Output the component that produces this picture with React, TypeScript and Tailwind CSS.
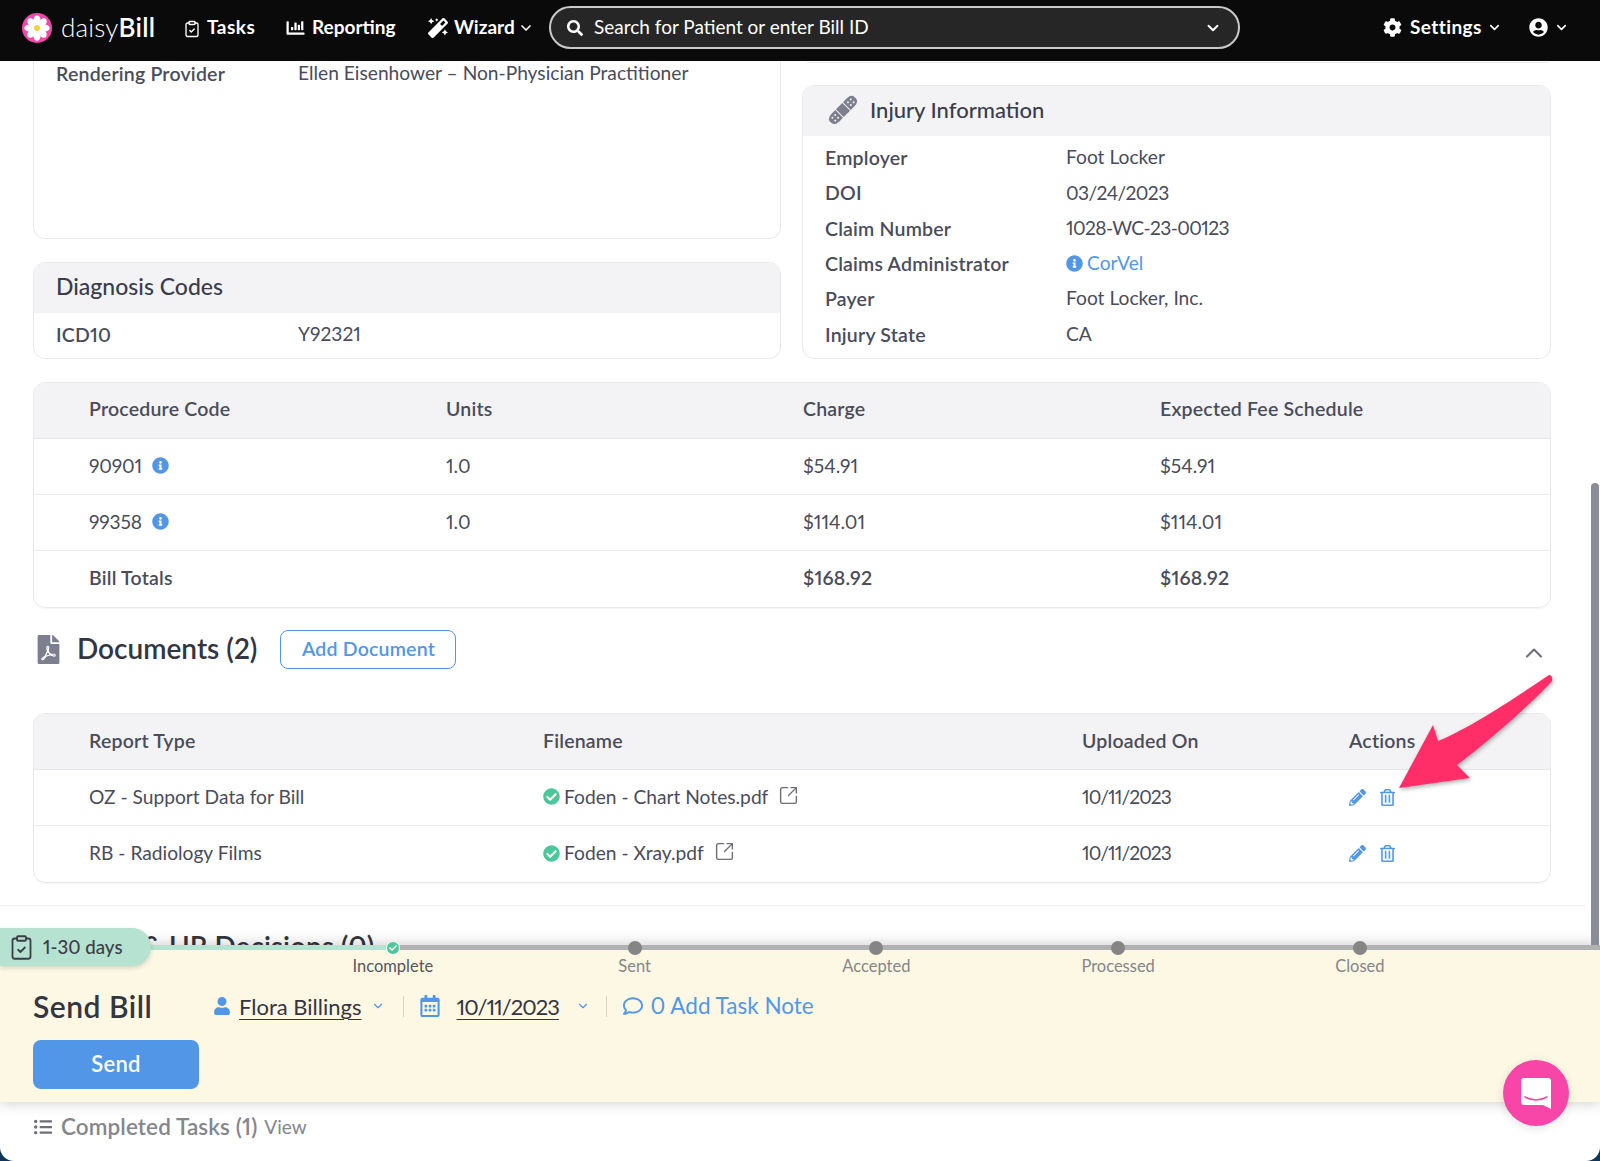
import { ChevronDown, ChevronUp, ClipboardCheck, SquareArrowOutUpRight } from 'lucide-react';
import {
    FaCheck,
    FaCheckCircle,
    FaChartBar,
    FaCog,
    FaFilePdf,
    FaInfoCircle,
    FaListUl,
    FaMagic,
    FaPencilAlt,
    FaRegCalendarAlt,
    FaRegComment,
    FaRegTrashAlt,
    FaSearch,
    FaUser,
    FaUserCircle,
} from 'react-icons/fa';

const injuryRows: [string, string][] = [
    ['Employer', 'Foot Locker'],
    ['DOI', '03/24/2023'],
    ['Claim Number', '1028-WC-23-00123'],
    ['Claims Administrator', 'CorVel'],
    ['Payer', 'Foot Locker, Inc.'],
    ['Injury State', 'CA'],
];

const procedures = [
    { code: '90901', units: '1.0', charge: '$54.91', fee: '$54.91' },
    { code: '99358', units: '1.0', charge: '$114.01', fee: '$114.01' },
];

const documents = [
    { type: 'OZ - Support Data for Bill', file: 'Foden - Chart Notes.pdf', date: '10/11/2023' },
    { type: 'RB - Radiology Films', file: 'Foden - Xray.pdf', date: '10/11/2023' },
];

const steps = ['Incomplete', 'Sent', 'Accepted', 'Processed', 'Closed'];

function DaisyLogo() {
    const petals = [0, 45, 90, 135, 180, 225, 270, 315];
    return (
        <svg width="30" height="30" viewBox="0 0 30 30">
            <circle cx="15" cy="15" r="15" fill="#f845a8" />
            {petals.map((a) => (
                <ellipse key={a} cx="15" cy="7.5" rx="3.6" ry="5.2" fill="#fff" transform={`rotate(${a} 15 15)`} />
            ))}
            <circle cx="15" cy="15" r="2.8" fill="#f7d323" />
        </svg>
    );
}

function BandAid() {
    return (
        <svg width="30" height="30" viewBox="0 0 30 30" className="shrink-0">
            <g transform="rotate(-45 15 15)" fill="#7d7f8e">
                <path d="M9.5 9.5 H4 Q-2.5 9.5 -2.5 15 Q-2.5 20.5 4 20.5 H9.5 Z" />
                <rect x="10.5" y="9.5" width="9" height="11" />
                <path d="M20.5 9.5 H26 Q32.5 9.5 32.5 15 Q32.5 20.5 26 20.5 H20.5 Z" />
                <g fill="#f3f3f5">
                    <circle cx="2" cy="13" r="1" />
                    <circle cx="2" cy="17" r="1" />
                    <circle cx="6" cy="13" r="1" />
                    <circle cx="6" cy="17" r="1" />
                    <circle cx="24" cy="13" r="1" />
                    <circle cx="24" cy="17" r="1" />
                    <circle cx="28" cy="13" r="1" />
                    <circle cx="28" cy="17" r="1" />
                </g>
            </g>
        </svg>
    );
}

function NavBar() {
    return (
        <header className="h-[61px] shrink-0 bg-[#0a0a0a] flex items-center pl-[22px] pb-[6px] text-white text-[19px] font-bold proportional-nums">
            <DaisyLogo />
            <span className="ml-[9px] w-[97px] text-[26px] font-light tracking-[0.2px]">
                daisy<span className="font-semibold">Bill</span>
            </span>
            <ClipboardCheck className="ml-[25px] w-[18px] h-[20px] mt-[2px]" strokeWidth={1.8} />
            <span className="ml-[6px] w-[48px] tracking-[0.5px]">Tasks</span>
            <FaChartBar className="ml-[31px] w-[19px] h-[18px]" />
            <span className="ml-[7px] w-[85px]">Reporting</span>
            <FaMagic className="ml-[31px] w-[20px] h-[20px]" />
            <span className="ml-[6px] w-[59px]">Wizard</span>
            <ChevronDown className="ml-[5px] w-[16px] h-[16px]" strokeWidth={2.5} />
            <div className="ml-[15px] w-[691px] h-[43px] rounded-[22px] border-2 border-[#c9c9c9] bg-[#262626] flex items-center pl-[16px] pr-[16px] font-normal">
                <FaSearch className="w-[16px] h-[16px]" />
                <span className="ml-[11px] flex-1">Search for Patient or enter Bill ID</span>
                <ChevronDown className="w-[18px] h-[18px]" strokeWidth={2.5} />
            </div>
            <FaCog className="ml-[143px] w-[19px] h-[19px]" />
            <span className="ml-[8px] w-[72px] tracking-[0.4px]">Settings</span>
            <ChevronDown className="ml-[5px] w-[15px] h-[15px]" strokeWidth={2.5} />
            <FaUserCircle className="ml-[27px] w-[19px] h-[19px]" />
            <ChevronDown className="ml-[6px] w-[15px] h-[15px]" strokeWidth={2.5} />
        </header>
    );
}

function InfoDot() {
    return <FaInfoCircle className="w-[17px] h-[17px] text-[#5296e8]" />;
}

const strong = 'text-[19.5px] font-semibold tracking-[0.2px]';

function ProcedureTable() {
    const row = 'grid grid-cols-[357px_357px_357px_1fr] pl-[55px] items-center h-[56px]';
    return (
        <div className="mt-[23px] border border-[#e9e9ec] rounded-[12px] shadow-[0_1px_1px_rgba(0,0,0,0.04)] text-[19.2px] text-[#4a4c5a]">
            <div className={`${row} ${strong} pb-[3px] bg-[#f3f3f5] rounded-t-[12px] border-b border-[#e6e6ea]`}>
                <span>Procedure Code</span>
                <span>Units</span>
                <span>Charge</span>
                <span>Expected Fee Schedule</span>
            </div>
            {procedures.map((p) => (
                <div key={p.code} className={`${row} pb-[1px] border-b border-[#e9e9ec]`}>
                    <span className="flex items-center gap-[10px] tracking-[-0.2px]">
                        {p.code}
                        <InfoDot />
                    </span>
                    <span>{p.units}</span>
                    <span>{p.charge}</span>
                    <span>{p.fee}</span>
                </div>
            ))}
            <div className={`${row} ${strong} pb-[2px] font-bold`}>
                <span>Bill Totals</span>
                <span />
                <span>$168.92</span>
                <span>$168.92</span>
            </div>
        </div>
    );
}

function DocumentsTable() {
    const row = 'grid grid-cols-[454px_539px_267px_1fr] pl-[55px] items-center h-[56px]';
    return (
        <div className="mt-[44px] border border-[#e9e9ec] rounded-[12px] shadow-[0_1px_1px_rgba(0,0,0,0.04)] text-[19.2px] text-[#4a4c5a]">
            <div className={`${row} ${strong} pb-[2px] bg-[#f3f3f5] rounded-t-[12px] border-b border-[#e6e6ea]`}>
                <span>Report Type</span>
                <span>Filename</span>
                <span>Uploaded On</span>
                <span>Actions</span>
            </div>
            {documents.map((d, i) => (
                <div key={d.file} className={`${row} pb-[1px] ${i === 0 ? 'border-b border-[#e9e9ec]' : ''}`}>
                    <span>{d.type}</span>
                    <span className="flex items-center">
                        <FaCheckCircle className="w-[17px] h-[17px] text-[#4cc79c]" />
                        <span className="ml-[4px]">{d.file}</span>
                        <SquareArrowOutUpRight className="ml-[10px] w-[21px] h-[21px] text-[#6b6d7b] -mt-[3px]" strokeWidth={1.6} />
                    </span>
                    <span className="tracking-[-0.9px]">{d.date}</span>
                    <span className="flex items-center gap-[14px] text-[#5296e8]">
                        <FaPencilAlt className="w-[17px] h-[17px]" />
                        <FaRegTrashAlt className="w-[15px] h-[17px]" />
                    </span>
                </div>
            ))}
        </div>
    );
}

function MainContent() {
    return (
        <main className="h-[884px] shrink-0 overflow-hidden">
            <div className="pl-[33px] pr-[49px]">
                <div className="grid grid-cols-[748px_1fr] gap-x-[21px]">
                    <div>
                        <div className="h-[178px] border border-t-0 border-[#e9e9ec] rounded-b-[12px] px-[22px] text-[19.2px] text-[#4a4c5a]">
                            <div className="flex h-[25px] items-center">
                                <span className={`w-[242px] ${strong}`}>Rendering Provider</span>
                                <span>Ellen Eisenhower – Non-Physician Practitioner</span>
                            </div>
                        </div>
                        <div className="mt-[23px] h-[97px] border border-[#e9e9ec] rounded-[12px] text-[19.2px] text-[#4a4c5a]">
                            <div className="h-[50px] bg-[#f3f3f5] rounded-t-[12px] flex items-center px-[22px] pb-[3px] text-[23px] font-medium text-[#3a3c4a]">
                                Diagnosis Codes
                            </div>
                            <div className="flex px-[22px] h-[46px] pb-[3px] items-center">
                                <span className={`w-[242px] ${strong}`}>ICD10</span>
                                <span>Y92321</span>
                            </div>
                        </div>
                    </div>
                    <div>
                        <div className="ml-[5px] mr-[2px] h-[2px] border-b border-[#ececef]" />
                        <div className="mt-[22px] h-[274px] border border-[#e9e9ec] rounded-[12px] text-[19.2px] text-[#4a4c5a]">
                            <div className="h-[50px] bg-[#f3f3f5] rounded-t-[12px] flex items-center pl-[25px] pb-[3px] text-[22px] font-medium text-[#3a3c4a]">
                                <BandAid />
                                <span className="ml-[12px] -mt-[1px]">Injury Information</span>
                            </div>
                            <div className="pl-[22px] pt-[4px]">
                                {injuryRows.map(([label, value]) => (
                                    <div key={label} className="flex h-[35.3px] items-center">
                                        <span className={`w-[241px] ${strong}`}>{label}</span>
                                        {label === 'Claims Administrator' ? (
                                            <span className="flex items-center gap-[4px] text-[#5296e8]">
                                                <FaInfoCircle className="w-[17px] h-[17px]" />
                                                {value}
                                            </span>
                                        ) : (
                                            <span className={label === 'DOI' || label === 'Claim Number' ? 'tracking-[-0.6px]' : ''}>{value}</span>
                                        )}
                                    </div>
                                ))}
                            </div>
                        </div>
                    </div>
                </div>

                <ProcedureTable />

                <div className="mt-[22px] h-[39px] flex items-center">
                    <FaFilePdf className="ml-[4px] w-[23px] h-[29px] text-[#7d7f8e]" />
                    <h2 className="ml-[17px] pb-[3px] text-[28px] font-semibold text-[#33353f]">Documents (2)</h2>
                    <button className={`ml-[23px] w-[176px] h-[39px] rounded-[8px] border border-[#5296e8] pb-[2px] text-[#5296e8] ${strong}`}>
                        Add Document
                    </button>
                    <ChevronUp className="ml-auto mr-[3px] mt-[7px] w-[28px] h-[28px] text-[#6b6d7b]" strokeWidth={1.8} />
                </div>

                <DocumentsTable />
            </div>
            <div className="mt-[22px] mr-[15px] border-t border-[#ededf0]" />
            <div className="pl-[33px] pt-[23px]">
                <h2 className="text-[28px] leading-[34px] font-semibold text-[#33353f]">Reviews &amp; UR Decisions (0)</h2>
            </div>
        </main>
    );
}

function BottomPanel() {
    return (
        <section className="relative shrink-0 shadow-[0_0_14px_rgba(0,0,0,0.22)]">
            <div className="h-[5px] flex">
                <div className="w-[393px] bg-[#b5e2d1]" />
                <div className="flex-1 bg-[#b1b1b1]" />
            </div>
            <div className="relative h-[152px] bg-[#fdf8e4]">
                <div className="absolute -top-[9px] left-[272px] flex">
                    {steps.map((s, i) => (
                        <div key={s} className="w-[241.75px] flex flex-col items-center">
                            {i === 0 ? (
                                <div className="w-[14px] h-[14px] rounded-full bg-[#4cc79c] border border-white flex items-center justify-center">
                                    <FaCheck className="w-[8px] h-[8px] text-white" />
                                </div>
                            ) : (
                                <div className="w-[14px] h-[14px] rounded-full bg-[#858585]" />
                            )}
                            <span className={`-mt-[1px] text-[16.5px] ${i === 0 ? 'text-[#55565f]' : 'text-[#85858a]'}`}>{s}</span>
                        </div>
                    ))}
                </div>
                <div className="pl-[33px] pt-[40px]">
                    <div className="flex items-center h-[34px] pb-[2px]">
                        <span className="w-[181px] text-[30px] font-semibold tracking-[0.5px] text-[#33353f]">Send Bill</span>
                        <FaUser className="w-[16px] h-[18px] text-[#5296e8]" />
                        <span className="ml-[9px] text-[22px] text-[#33353f] underline underline-offset-4 decoration-1">Flora Billings</span>
                        <ChevronDown className="ml-[10px] w-[14px] h-[14px] text-[#5296e8]" />
                        <div className="ml-[18px] w-px h-[21px] bg-[#d9d5c2]" />
                        <FaRegCalendarAlt className="ml-[16px] w-[20px] h-[22px] text-[#5296e8]" />
                        <span className="ml-[16px] w-[102px] text-[22px] tracking-[-1px] text-[#33353f] underline underline-offset-4 decoration-1">10/11/2023</span>
                        <ChevronDown className="ml-[18px] w-[14px] h-[14px] text-[#5296e8]" />
                        <div className="ml-[16px] w-px h-[21px] bg-[#d9d5c2]" />
                        <FaRegComment className="ml-[15px] w-[22px] h-[20px] text-[#5296e8]" />
                        <span className="ml-[6px] text-[22.5px] text-[#5296e8]">0 Add Task Note</span>
                    </div>
                    <button className="mt-[16px] w-[166px] h-[49px] rounded-[8px] bg-[#5296e8] pb-[3px] text-white text-[22px] font-semibold tracking-[0.3px]">
                        Send
                    </button>
                </div>
            </div>
            <div className="absolute left-0 -top-[17px] w-[151px] h-[38px] rounded-r-[19px] bg-[#b5e2d1] flex items-center pl-[8px] text-[#3b3d45] text-[18.7px] font-medium shadow-[0_2px_5px_rgba(0,0,0,0.15)]">
                <ClipboardCheck className="w-[27px] h-[31px]" strokeWidth={1.6} />
                <span className="ml-[8px]">1-30 days</span>
            </div>
        </section>
    );
}

function CompletedTasks() {
    return (
        <div className="flex-1 flex items-start pl-[33px] pt-[14px] text-[#85858a]">
            <div className="flex items-center h-[22px]">
                <FaListUl className="w-[20px] h-[18px] text-[#6f6f75]" />
                <span className="ml-[8px] text-[22.5px] font-semibold tracking-[0.1px]">Completed Tasks (1)</span>
                <span className="ml-[7px] text-[19px]">View</span>
            </div>
        </div>
    );
}

// annotation arrow added on top of the screenshot
function PinkArrow() {
    return (
        <svg className="absolute left-[1390px] top-[670px] drop-shadow-[1px_2px_2px_rgba(0,0,0,0.3)]" width="170" height="125" viewBox="1390 670 170 125">
            <path
                d="M1549 675 Q1553 675 1552 681 C1530 705 1490 740 1457 765 L1470 778 L1399 788 L1433 725 L1438 741 C1470 728 1515 698 1549 675 Z"
                fill="#ff2d68"
            />
        </svg>
    );
}

function ChatBubble() {
    return (
        <div className="absolute left-[1503px] top-[1060px] w-[66px] h-[66px] rounded-full bg-[#f845a8] flex items-center justify-center shadow-[0_2px_10px_rgba(0,0,0,0.12)]">
            <svg width="30" height="32" viewBox="0 0 30 32">
                <path d="M3 1 H27 Q30 1 30 4 V32 L22 28 H3 Q0 28 0 25 V4 Q0 1 3 1 Z" fill="#fff" />
                <path d="M4 20 Q15 26 26 20" stroke="#f845a8" strokeWidth="1.6" fill="none" strokeLinecap="round" />
            </svg>
        </div>
    );
}

export default function App() {
    return (
        <div className="relative w-[1600px] h-[1161px] overflow-hidden bg-[#0f3557] font-['Lato',sans-serif] proportional-nums">
            <div className="h-full flex flex-col bg-white rounded-b-[14px] overflow-hidden">
                <NavBar />
                <MainContent />
                <BottomPanel />
                <CompletedTasks />
            </div>
            <div className="absolute left-[1591px] top-[483px] w-[8px] h-[462px] rounded-t-[4px] bg-[#8a8c97]" />
            <PinkArrow />
            <ChatBubble />
        </div>
    );
}
